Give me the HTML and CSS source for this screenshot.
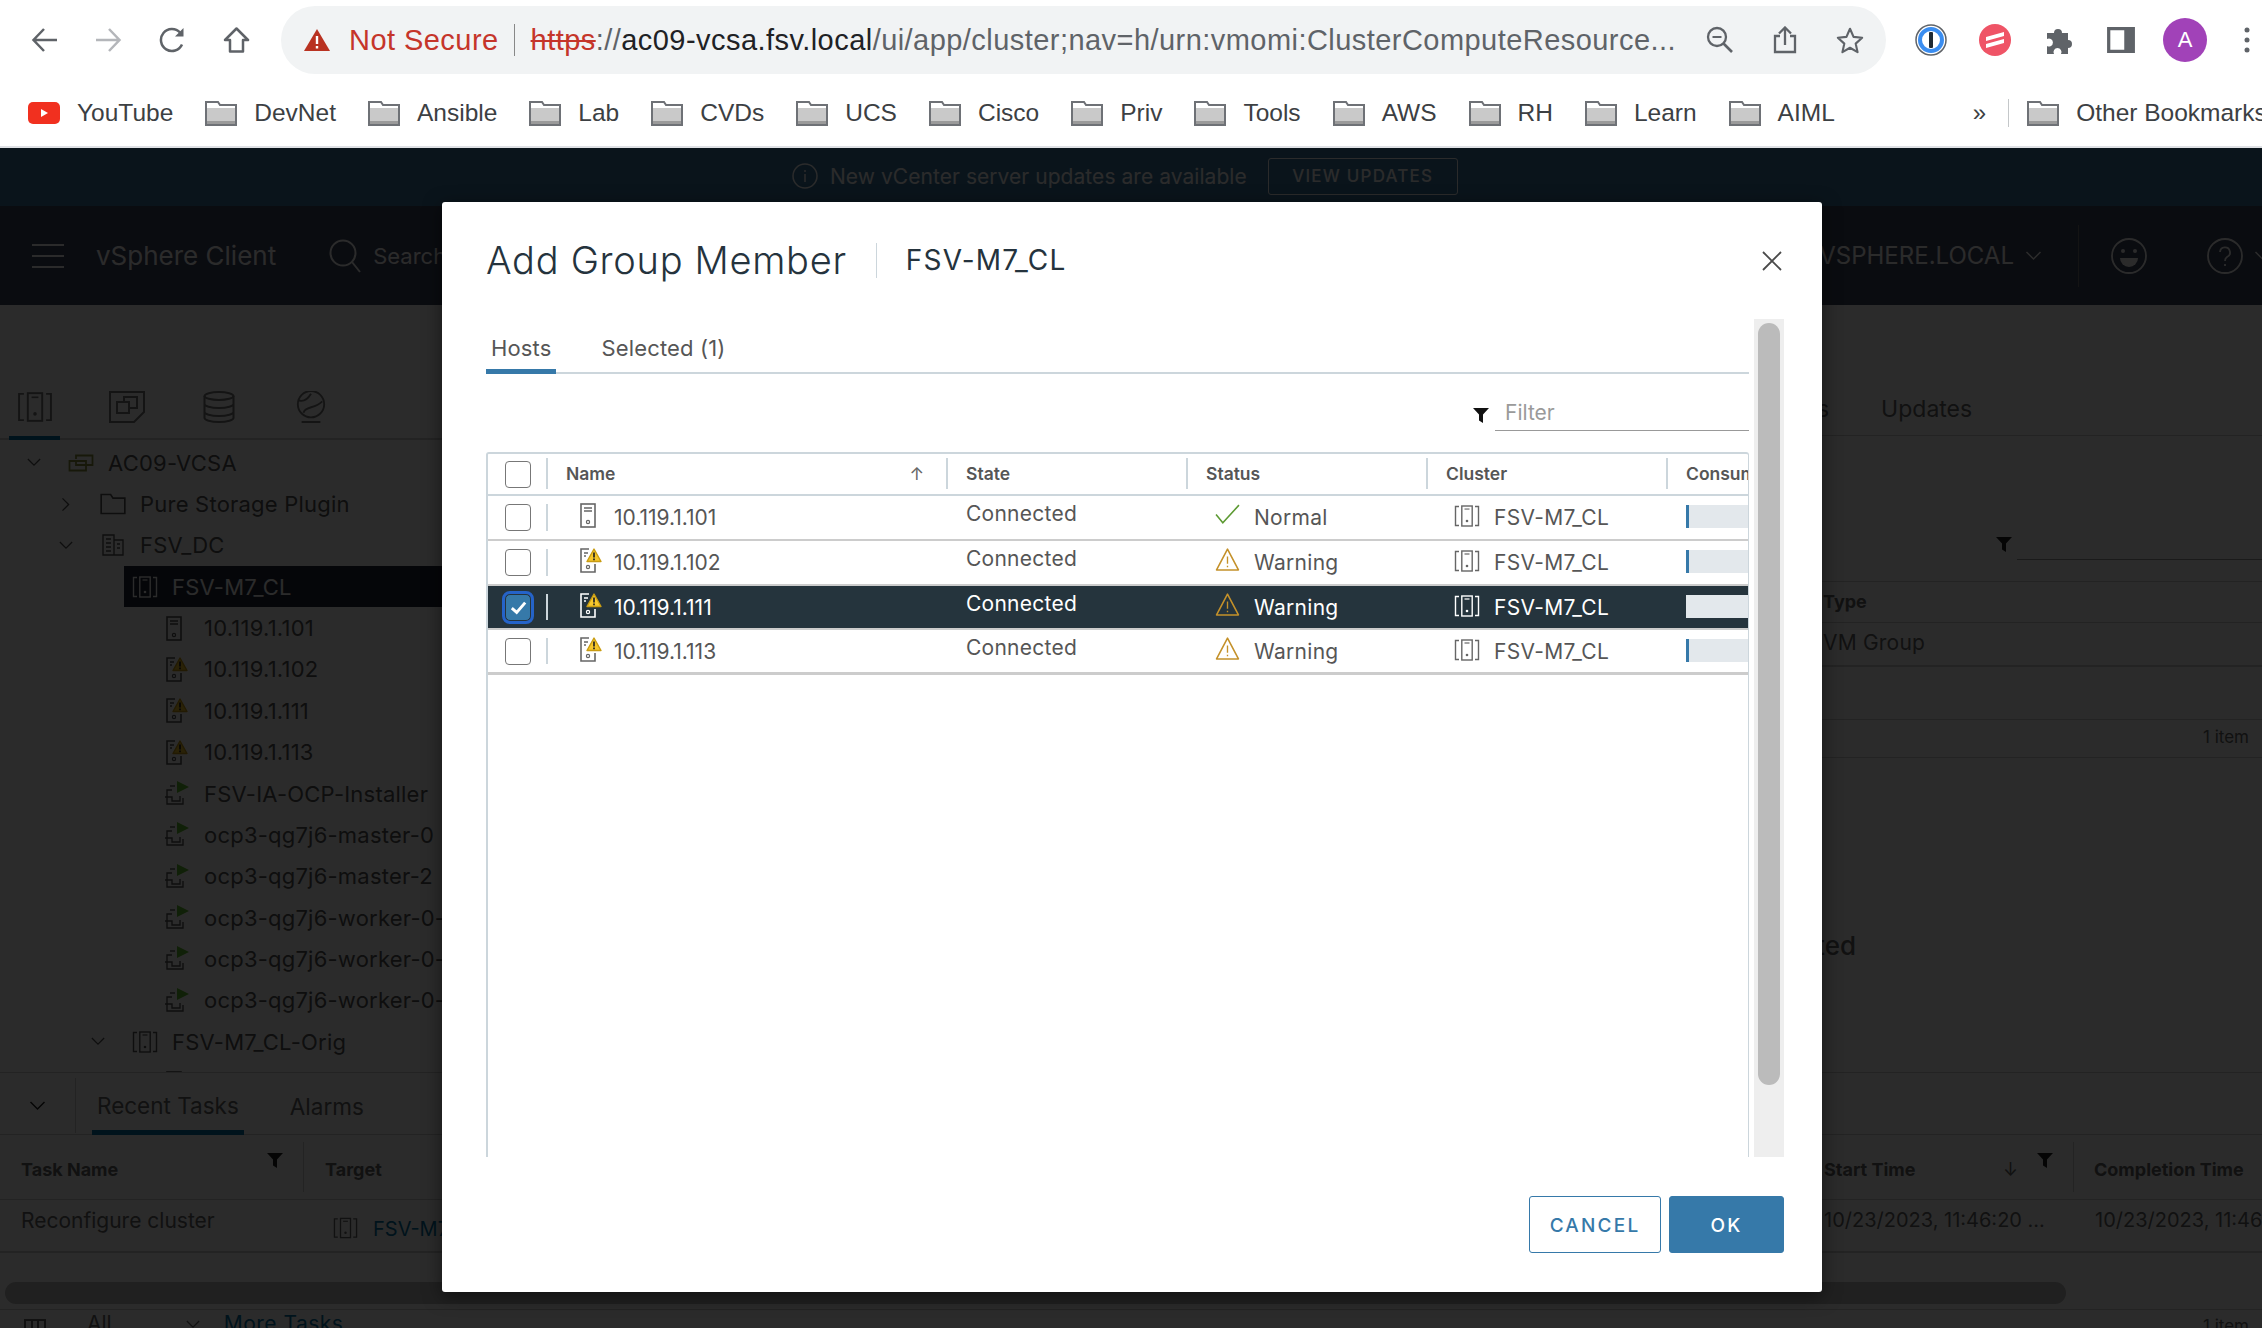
FILE: index.html
```html
<!DOCTYPE html>
<html lang="en">
    <head>
        <meta charset="utf-8">
        <title>Add Group Member</title>
        <link rel="stylesheet" href="styles.css">
    </head>
    <body>
        <!-- shared icons -->
        <svg class="sprite" aria-hidden="true">
            <symbol id="i-folder" viewBox="0 0 32 26">
                <path d="M1 25V2h12l2 3h16v20z" fill="#fff" stroke="#6e7176" stroke-width="2"/>
                <rect x="2" y="8" width="28" height="16" fill="#c9c9c9"/>
                <rect x="2" y="21" width="28" height="3" fill="#9a9a9a"/>
            </symbol>
            <symbol id="i-host" viewBox="0 0 22 25">
                <rect x="1" y="1" width="14" height="23" fill="none" stroke="currentColor" stroke-width="1.6"/>
                <path d="M4 5h8M4 8h8" stroke="currentColor" stroke-width="1.4"/>
                <circle cx="8" cy="19" r="1.6" fill="none" stroke="currentColor" stroke-width="1.2"/>
            </symbol>
            <symbol id="i-host-warn" viewBox="0 0 22 25">
                <path d="M15 16v8H1V1h8" fill="none" stroke="currentColor" stroke-width="1.6"/>
                <path d="M4 5h4M4 8h2" stroke="currentColor" stroke-width="1.4"/>
                <circle cx="8" cy="19" r="1.6" fill="none" stroke="currentColor" stroke-width="1.2"/>
                <path d="M14 1l7 12.5H7z" fill="#f6c72c" stroke="#c99c12" stroke-width="1.4" stroke-linejoin="round"/>
                <path d="M14 4.5v5M14 10.6v1.6" stroke="#222" stroke-width="1.7"/>
            </symbol>
            <symbol id="i-warning" viewBox="0 0 24 24">
                <path d="M12 2L22.5 22H1.500z" fill="none" stroke="#c4912a" stroke-width="1.5" stroke-linejoin="round"/>
                <path d="M12 9v7M12 18v1.500" stroke="#c4912a" stroke-width="1.3"/>
            </symbol>
            <symbol id="i-cluster" viewBox="0 0 26 22">
                <path d="M5 1.500H1.500v19H5M21 1.500h3.500v19H21" fill="none" stroke="currentColor" stroke-width="1.400"/>
                <rect x="7.800" y="1" width="10.400" height="20" fill="none" stroke="currentColor" stroke-width="1.400"/>
                <path d="M10.500 4h5" stroke="currentColor" stroke-width="1.200"/>
                <circle cx="13" cy="16" r="1.300" fill="currentColor"/>
            </symbol>
            <symbol id="i-funnel" viewBox="0 0 16 15">
                <path d="M0 0h16L10 6.500V15L6 12.500V6.500z" fill="currentColor"/>
            </symbol>
            <symbol id="i-vm" viewBox="0 0 26 25">
                <path d="M8 9H3v14h16v-6M1 16h7v4h8v-5" fill="none" stroke="currentColor" stroke-width="1.400"/>
                <path d="M6 5h5" stroke="currentColor" stroke-width="1.400"/>
                <path d="M13 0l12 6-12 6z" fill="#62bd2f"/>
            </symbol>
            <symbol id="i-chevron" viewBox="0 0 16 10">
                <path d="M1 1l7 7 7-7" fill="none" stroke="currentColor" stroke-width="1.500"/>
            </symbol>
        </svg>

        <div class="browser-bar">
            <div class="nav-buttons">
                <svg class="chrome-icon" viewBox="0 0 27 26"><path d="M26 13H3M13 2L2.500 13 13 24" fill="none" stroke="#5f6368" stroke-width="2.500"/></svg>
                <svg class="chrome-icon" viewBox="0 0 27 26"><path d="M1 13h23M14 2l10.500 11L14 24" fill="none" stroke="#b4b6ba" stroke-width="2.500"/></svg>
                <svg class="chrome-icon" viewBox="0 0 27 26"><path d="M23 17.500A11 11 0 1 1 21 5.500" fill="none" stroke="#5f6368" stroke-width="2.500"/><path d="M24.500 1v8.500H16z" fill="#5f6368"/></svg>
                <svg class="chrome-icon" viewBox="0 0 27 26"><path d="M13.500 1.500L25 13h-5v11.500H7V13H2z" fill="none" stroke="#5f6368" stroke-width="2.500" stroke-linejoin="round"/></svg>
            </div>
            <div class="omnibox">
                <svg class="not-secure-icon" viewBox="0 0 26 22"><path d="M13 0l13 22H0z" fill="#b93221"/><path d="M13 7v8M13 17v2.500" stroke="#fff" stroke-width="2.400"/></svg>
                <span class="not-secure">Not Secure</span>
                <span class="omni-sep"></span>
                <span class="url"><s>https</s><span class="url-dim">://</span><span class="url-host">ac09-vcsa.fsv.local</span><span class="url-dim">/ui/app/cluster;nav=h/urn:vmomi:ClusterComputeResource...</span></span>
                <div class="omni-actions">
                    <svg class="omni-icon" viewBox="0 0 28 28"><circle cx="11" cy="11" r="9" fill="none" stroke="#5f6368" stroke-width="2.300"/><path d="M17.500 17.500L26 26" stroke="#5f6368" stroke-width="2.600"/><path d="M6.500 11h9" stroke="#5f6368" stroke-width="2"/></svg>
                    <svg class="omni-icon" viewBox="0 0 28 28"><path d="M9 10H4v16h20V10h-5" fill="none" stroke="#5f6368" stroke-width="2.300"/><path d="M14 19V2M8 7.500L14 1.500l6 6" fill="none" stroke="#5f6368" stroke-width="2.300"/></svg>
                    <svg class="omni-icon" viewBox="0 0 30 28"><path d="M15 2l3.800 8.600 9.200 1-6.900 6.300 2 9.100-8.100-4.700L6.900 27l2-9.100L2 11.600l9.200-1z" fill="none" stroke="#5f6368" stroke-width="2.300" stroke-linejoin="round"/></svg>
                </div>
            </div>
            <div class="extensions">
                <svg class="ext-icon" viewBox="0 0 32 32"><circle cx="16" cy="16" r="15" fill="#fff" stroke="#5f6368" stroke-width="1.500"/><circle cx="16" cy="16" r="11" fill="none" stroke="#3a8df0" stroke-width="4"/><rect x="14" y="8" width="4" height="16" rx="1" fill="#1f2a33"/></svg>
                <svg class="ext-icon" viewBox="0 0 32 32"><circle cx="16" cy="16" r="16" fill="#ef5466"/><path d="M7 13l18-5v4L7 17zM7 20l18-5v4L7 24z" fill="#fff"/></svg>
                <svg class="ext-icon" viewBox="0 0 32 32"><path d="M4 9h7a4 4 0 1 1 8 0h6v7a4 4 0 1 1 0 8v6h-7a4 4 0 1 0-7 0H4v-8a4 4 0 1 0 0-7z" fill="#5f6368"/></svg>
                <svg class="ext-icon" viewBox="0 0 30 28"><rect width="30" height="28" fill="#5f6368"/><rect x="3.500" y="3.500" width="15" height="21" fill="#fff"/></svg>
                <span class="avatar">A</span>
                <svg class="menu-dots" viewBox="0 0 6 26"><circle cx="3" cy="3" r="2.500"/><circle cx="3" cy="13" r="2.500"/><circle cx="3" cy="23" r="2.500"/></svg>
            </div>
        </div>

        <div class="bookmarks">
            <span class="bookmark"><svg class="yt-icon" viewBox="0 0 32 22"><rect width="32" height="22" rx="5" fill="#f1301f"/><path d="M13 7l7 4-7 4z" fill="#fff"/></svg>YouTube</span>
            <span class="bookmark"><svg class="folder"><use href="#i-folder"/></svg>DevNet</span>
            <span class="bookmark"><svg class="folder"><use href="#i-folder"/></svg>Ansible</span>
            <span class="bookmark"><svg class="folder"><use href="#i-folder"/></svg>Lab</span>
            <span class="bookmark"><svg class="folder"><use href="#i-folder"/></svg>CVDs</span>
            <span class="bookmark"><svg class="folder"><use href="#i-folder"/></svg>UCS</span>
            <span class="bookmark"><svg class="folder"><use href="#i-folder"/></svg>Cisco</span>
            <span class="bookmark"><svg class="folder"><use href="#i-folder"/></svg>Priv</span>
            <span class="bookmark"><svg class="folder"><use href="#i-folder"/></svg>Tools</span>
            <span class="bookmark"><svg class="folder"><use href="#i-folder"/></svg>AWS</span>
            <span class="bookmark"><svg class="folder"><use href="#i-folder"/></svg>RH</span>
            <span class="bookmark"><svg class="folder"><use href="#i-folder"/></svg>Learn</span>
            <span class="bookmark"><svg class="folder"><use href="#i-folder"/></svg>AIML</span>
            <span class="bookmarks-more">»</span>
            <span class="bookmark bookmark-other"><svg class="folder"><use href="#i-folder"/></svg>Other Bookmarks</span>
        </div>

        <main class="viewport">
            <div class="banner">
                <svg class="banner-icon" viewBox="0 0 26 26"><circle cx="13" cy="13" r="12" fill="none" stroke="#fff" stroke-width="1.500"/><path d="M13 11v8M13 7v2" stroke="#fff" stroke-width="1.500"/></svg>
                <span>New vCenter server updates are available</span>
                <span class="banner-btn">VIEW UPDATES</span>
            </div>

            <header class="topbar">
                <span class="hamburger"><i></i><i></i><i></i></span>
                <span class="brand">vSphere Client</span>
                <svg class="topbar-search" viewBox="0 0 32 34"><circle cx="14" cy="14" r="12.500" fill="none" stroke="#fff" stroke-width="2"/><path d="M23 23l8 10" stroke="#fff" stroke-width="2"/></svg>
                <span class="search-label">Search in all environments</span>
                <span class="user">ADMINISTRATOR@VSPHERE.LOCAL</span>
                <svg class="user-chevron"><use href="#i-chevron"/></svg>
                <span class="topbar-sep"></span>
                <svg class="topbar-icon" viewBox="0 0 36 36"><circle cx="18" cy="18" r="17" fill="none" stroke="#fff" stroke-width="1.800"/><circle cx="12" cy="13" r="2" fill="#fff"/><circle cx="24" cy="13" r="2" fill="#fff"/><path d="M9 20h18a9 9 0 0 1-18 0z" fill="#fff"/></svg>
                <svg class="topbar-icon help-icon" viewBox="0 0 36 36"><circle cx="18" cy="18" r="17" fill="none" stroke="#fff" stroke-width="1.800"/><path d="M13 14a5 5 0 1 1 7 5c-1.500 1-2 2-2 4M18 26v2" fill="none" stroke="#fff" stroke-width="1.800"/></svg>
                <svg class="user-chevron last-chevron"><use href="#i-chevron"/></svg>
            </header>

            <div class="workspace">
                <aside class="sidebar">
                    <div class="sidebar-tabs">
                        <span class="sidebar-tab active"><svg class="sidebar-icon"><use href="#i-cluster"/></svg></span>
                        <span class="sidebar-tab"><svg class="sidebar-icon" viewBox="0 0 36 32"><path d="M1 1h34v20l-10 10H1z" fill="none" stroke="currentColor" stroke-width="2"/><path d="M8 11h12v11H8zM15 11V6h13v11h-8" fill="none" stroke="currentColor" stroke-width="2"/></svg></span>
                        <span class="sidebar-tab"><svg class="sidebar-icon" viewBox="0 0 32 32"><ellipse cx="16" cy="5" rx="14.500" ry="4" fill="none" stroke="currentColor" stroke-width="2"/><path d="M1.500 5v22c0 2 6 4 14.500 4s14.500-2 14.500-4V5M1.500 13c0 2 6 4 14.500 4s14.500-2 14.500-4M1.500 21c0 2 6 4 14.500 4s14.500-2 14.500-4" fill="none" stroke="currentColor" stroke-width="2"/></svg></span>
                        <span class="sidebar-tab"><svg class="sidebar-icon" viewBox="0 0 32 34"><circle cx="16" cy="14" r="14" fill="none" stroke="currentColor" stroke-width="2"/><path d="M3 10c6 2 10-2 13-7M8 23c2-7 12-4 20-12M6 33h20" fill="none" stroke="currentColor" stroke-width="2"/></svg></span>
                    </div>
                    <div class="tree">
                        <div class="tree-row lvl-0"><svg class="twisty"><use href="#i-chevron"/></svg><span class="tree-icon vc-icon"><svg viewBox="0 0 26 18"><path d="M8 5V1.500h16.500V11H18M1.500 7H18v9.500H1.500zM8 7v4h10" fill="none" stroke="currentColor" stroke-width="1.800"/></svg></span><span>AC09-VCSA</span></div>
                        <div class="tree-row lvl-1"><svg class="twisty twisty-closed"><use href="#i-chevron"/></svg><span class="tree-icon"><svg viewBox="0 0 22 18"><path d="M1 17V1h8l2 3h10v13z" fill="none" stroke="currentColor" stroke-width="1.400"/></svg></span><span>Pure Storage Plugin</span></div>
                        <div class="tree-row lvl-1"><svg class="twisty"><use href="#i-chevron"/></svg><span class="tree-icon"><svg viewBox="0 0 22 22"><path d="M1 21V1h11v20zM12 6h9v15h-9M4 5h5M4 9h5M4 13h5M4 17h5M15 10h3M15 14h3" fill="none" stroke="currentColor" stroke-width="1.400"/></svg></span><span>FSV_DC</span></div>
                        <div class="tree-row lvl-2 selected"><svg class="twisty"><use href="#i-chevron"/></svg><span class="tree-icon"><svg><use href="#i-cluster"/></svg></span><span>FSV-M7_CL</span></div>
                        <div class="tree-row lvl-3"><span class="twisty"></span><span class="tree-icon"><svg><use href="#i-host"/></svg></span><span>10.119.1.101</span></div>
                        <div class="tree-row lvl-3"><span class="twisty"></span><span class="tree-icon"><svg><use href="#i-host-warn"/></svg></span><span>10.119.1.102</span></div>
                        <div class="tree-row lvl-3"><span class="twisty"></span><span class="tree-icon"><svg><use href="#i-host-warn"/></svg></span><span>10.119.1.111</span></div>
                        <div class="tree-row lvl-3"><span class="twisty"></span><span class="tree-icon"><svg><use href="#i-host-warn"/></svg></span><span>10.119.1.113</span></div>
                        <div class="tree-row lvl-3"><span class="twisty"></span><span class="tree-icon"><svg><use href="#i-vm"/></svg></span><span>FSV-IA-OCP-Installer</span></div>
                        <div class="tree-row lvl-3"><span class="twisty"></span><span class="tree-icon"><svg><use href="#i-vm"/></svg></span><span>ocp3-qg7j6-master-0</span></div>
                        <div class="tree-row lvl-3"><span class="twisty"></span><span class="tree-icon"><svg><use href="#i-vm"/></svg></span><span>ocp3-qg7j6-master-2</span></div>
                        <div class="tree-row lvl-3"><span class="twisty"></span><span class="tree-icon"><svg><use href="#i-vm"/></svg></span><span>ocp3-qg7j6-worker-0-1</span></div>
                        <div class="tree-row lvl-3"><span class="twisty"></span><span class="tree-icon"><svg><use href="#i-vm"/></svg></span><span>ocp3-qg7j6-worker-0-2</span></div>
                        <div class="tree-row lvl-3"><span class="twisty"></span><span class="tree-icon"><svg><use href="#i-vm"/></svg></span><span>ocp3-qg7j6-worker-0-3</span></div>
                        <div class="tree-row lvl-2"><svg class="twisty"><use href="#i-chevron"/></svg><span class="tree-icon"><svg><use href="#i-cluster"/></svg></span><span>FSV-M7_CL-Orig</span></div>
                        <div class="tree-row lvl-3"><span class="twisty"></span><span class="tree-icon"><svg><use href="#i-host"/></svg></span><span>10.119.1.103</span></div>
                    </div>
                </aside>

                <section class="content">
                    <div class="content-tabs"><span>Permissions</span><span>Updates</span></div>
                    <div class="content-filter">
                        <svg class="funnel"><use href="#i-funnel"/></svg>
                        <span class="content-filter-input"></span>
                    </div>
                    <div class="content-head">Type</div>
                    <div class="content-cell">VM Group</div>
                    <div class="content-gap"></div>
                    <div class="content-foot">1 item</div>
                    <div class="content-empty">No VM Group selected</div>
                </section>
            </div>

            <section class="tasks">
                <div class="tasks-tabs">
                    <span class="tasks-toggle"><svg class="tasks-chevron"><use href="#i-chevron"/></svg></span>
                    <span class="tasks-tab active">Recent Tasks</span>
                    <span class="tasks-tab">Alarms</span>
                </div>
                <div class="tasks-grid tasks-header">
                    <div class="tasks-col">Task Name<svg class="funnel tasks-funnel"><use href="#i-funnel"/></svg></div>
                    <div class="tasks-col">Target</div>
                    <div class="tasks-col">Start Time<span class="sort-down">↓</span><svg class="funnel tasks-funnel"><use href="#i-funnel"/></svg></div>
                    <div class="tasks-col">Completion Time</div>
                </div>
                <div class="tasks-grid tasks-row">
                    <div class="tasks-cell tasks-name">Reconfigure cluster</div>
                    <div class="tasks-cell tasks-target"><svg class="tasks-target-icon"><use href="#i-cluster"/></svg><span>FSV-M7_CL</span></div>
                    <div class="tasks-cell">10/23/2023, 11:46:20 ...</div>
                    <div class="tasks-cell">10/23/2023, 11:46:21 AM</div>
                </div>
                <div class="tasks-scroll"><span class="tasks-thumb"></span></div>
                <div class="tasks-foot">
                    <svg class="tasks-foot-icon" viewBox="0 0 22 16"><path d="M1 15V1h20v14M8 1v14M14 1v14" fill="none" stroke="currentColor" stroke-width="2"/></svg>
                    <span class="tasks-all">All</span>
                    <svg class="tasks-all-chevron"><use href="#i-chevron"/></svg>
                    <span class="tasks-more">More Tasks</span>
                    <span class="tasks-count">1 item</span>
                </div>
            </section>

            <div class="backdrop"></div>

            <div class="modal">
                <div class="modal-header">
                    <h3 class="modal-title">Add Group Member</h3>
                    <span class="modal-subtitle">FSV-M7_CL</span>
                    <svg class="modal-close" viewBox="0 0 20 20"><path d="M1 1l18 18M19 1L1 19" stroke="#4a4a4a" stroke-width="1.800"/></svg>
                </div>
                <div class="modal-body">
                    <div class="modal-content">
                        <div class="tabs">
                            <span class="tab active">Hosts</span>
                            <span class="tab">Selected (1)</span>
                        </div>
                        <div class="filter-row">
                            <svg class="funnel"><use href="#i-funnel"/></svg>
                            <span class="filter-input">Filter</span>
                        </div>
                        <div class="datagrid">
                            <div class="grid-row grid-header">
                                <div class="select-cell"><span class="checkbox"></span></div>
                                <div class="head-cell name-head">Name<span class="sort-up">↑</span></div>
                                <div class="head-cell">State</div>
                                <div class="head-cell">Status</div>
                                <div class="head-cell">Cluster</div>
                                <div class="head-cell">Consumed CPU</div>
                            </div>

                            <div class="grid-row host-row">
                                <div class="select-cell"><span class="checkbox"></span></div>
                                <div class="name-cell"><svg class="host-icon"><use href="#i-host"/></svg>10.119.1.101</div>
                                <div class="state-cell">Connected</div>
                                <div class="status-cell"><svg class="status-icon" viewBox="0 0 24 24"><path d="M1 12l6.500 8L23 3" fill="none" stroke="#5d9a33" stroke-width="1.500"/></svg>Normal</div>
                                <div class="cluster-cell"><svg class="cluster-icon"><use href="#i-cluster"/></svg>FSV-M7_CL</div>
                                <div class="bar-cell"><span class="usage-bar"></span></div>
                            </div>

                            <div class="grid-row host-row">
                                <div class="select-cell"><span class="checkbox"></span></div>
                                <div class="name-cell"><svg class="host-icon"><use href="#i-host-warn"/></svg>10.119.1.102</div>
                                <div class="state-cell">Connected</div>
                                <div class="status-cell"><svg class="status-icon"><use href="#i-warning"/></svg>Warning</div>
                                <div class="cluster-cell"><svg class="cluster-icon"><use href="#i-cluster"/></svg>FSV-M7_CL</div>
                                <div class="bar-cell"><span class="usage-bar"></span></div>
                            </div>

                            <div class="grid-row host-row is-selected">
                                <div class="select-cell"><span class="checkbox checked"><svg viewBox="0 0 14 12"><path d="M1.500 6.500L5.500 10l7-8" fill="none" stroke="#fff" stroke-width="2.400"/></svg></span></div>
                                <div class="name-cell"><svg class="host-icon"><use href="#i-host-warn"/></svg>10.119.1.111</div>
                                <div class="state-cell">Connected</div>
                                <div class="status-cell"><svg class="status-icon"><use href="#i-warning"/></svg>Warning</div>
                                <div class="cluster-cell"><svg class="cluster-icon"><use href="#i-cluster"/></svg>FSV-M7_CL</div>
                                <div class="bar-cell"><span class="usage-bar"></span></div>
                            </div>

                            <div class="grid-row host-row last-row">
                                <div class="select-cell"><span class="checkbox"></span></div>
                                <div class="name-cell"><svg class="host-icon"><use href="#i-host-warn"/></svg>10.119.1.113</div>
                                <div class="state-cell">Connected</div>
                                <div class="status-cell"><svg class="status-icon"><use href="#i-warning"/></svg>Warning</div>
                                <div class="cluster-cell"><svg class="cluster-icon"><use href="#i-cluster"/></svg>FSV-M7_CL</div>
                                <div class="bar-cell"><span class="usage-bar"></span></div>
                            </div>
                        </div>
                    </div>
                    <div class="scrollbar"><span class="scrollbar-thumb"></span></div>
                </div>
                <div class="modal-footer">
                    <button class="btn btn-outline">CANCEL</button>
                    <button class="btn btn-primary">OK</button>
                </div>
            </div>
        </main>
    </body>
</html>
```

FILE: styles.css
```css
html, body {
    height: 100%;
}

body {
    margin: 0;
    height: 1328px;
    overflow: hidden;
    display: flex;
    flex-direction: column;
    font-family: Inter, 'Open Sans', sans-serif;
    background-color: #fff;
}

.sprite {
    display: none;
}

/* Browser chrome */
.browser-bar {
    height: 81px;
    flex: none;
    display: flex;
    align-items: flex-start;
    padding-top: 6px;
    box-sizing: border-box;
    font-family: 'Liberation Sans', sans-serif;
}

.nav-buttons {
    display: flex;
    gap: 37px;
    padding: 21px 0 0 31px;
    width: 281px;
    box-sizing: border-box;
}

.chrome-icon {
    width: 27px;
    height: 26px;
    flex: none;
}

.omnibox {
    width: 1605px;
    height: 68px;
    border-radius: 34px;
    background-color: #f1f3f4;
    display: flex;
    align-items: center;
    padding-left: 23px;
    box-sizing: border-box;
    font-size: 29px;
    letter-spacing: 0.45px;
    white-space: nowrap;
}

.not-secure-icon {
    width: 26px;
    height: 22px;
    margin-right: 19px;
}

.not-secure {
    color: #c5352a;
}

.omni-sep {
    width: 1px;
    height: 32px;
    background-color: #888;
    margin: 0 16px 0 15px;
}

.url {
    color: #5f6368;
}

.url s {
    color: #c5352a;
}

.url-host {
    color: #202124;
}

.omni-actions {
    display: flex;
    gap: 37px;
    margin-left: 30px;
    align-items: center;
}

.omni-icon {
    width: 28px;
    height: 28px;
}

.extensions {
    display: flex;
    align-items: center;
    height: 68px;
    padding-left: 29px;
    gap: 32px;
}

.ext-icon {
    width: 32px;
    height: 32px;
}

.extensions .ext-icon:nth-child(4) {
    width: 28px;
    height: 26px;
}

.avatar {
    width: 44px;
    height: 44px;
    margin-left: -4px;
    border-radius: 50%;
    background-color: #a142b8;
    color: #fff;
    font-size: 22px;
    display: flex;
    align-items: center;
    justify-content: center;
}

.menu-dots {
    width: 6px;
    height: 26px;
    margin-left: 5px;
    fill: #5f6368;
    flex: none;
}

.bookmarks {
    height: 67px;
    flex: none;
    box-sizing: border-box;
    border-bottom: 2px solid #dfe1e5;
    display: flex;
    align-items: center;
    padding: 0 0 1px 28px;
    gap: 32px;
    font-family: 'Liberation Sans', sans-serif;
    font-size: 24.5px;
    color: #3c4043;
    white-space: nowrap;
    overflow: hidden;
}

.bookmark {
    display: flex;
    align-items: center;
    gap: 17px;
}

.yt-icon {
    width: 32px;
    height: 22px;
    flex: none;
}

.folder {
    width: 32px;
    height: 26px;
    flex: none;
}

.bookmarks-more {
    margin-left: 106px;
    font-size: 24px;
    padding-right: 22px;
    border-right: 1px solid #c4c7c9;
}

.bookmark-other {
    margin-left: -14px;
}

/* vSphere client behind the dialog */
.viewport {
    position: relative;
    flex: 1;
    overflow: hidden;
    display: flex;
    flex-direction: column;
    background-color: #fff;
    color: #666;
    white-space: nowrap;
}

.backdrop {
    position: absolute;
    inset: 0;
    background-color: rgba(0, 0, 0, 0.83);
}

.banner {
    height: 58px;
    flex: none;
    background-color: #3b769f;
    color: #fff;
    font-size: 21px;
    letter-spacing: 0.05px;
    display: flex;
    align-items: center;
    padding: 0 0 2px 792px;
    box-sizing: border-box;
}

.banner-icon {
    width: 26px;
    height: 26px;
    margin-right: 12px;
}

.banner-btn {
    margin-left: 21px;
    width: 190px;
    height: 37px;
    box-sizing: border-box;
    border: 1px solid #fff;
    border-radius: 3px;
    display: flex;
    align-items: center;
    justify-content: center;
    font-size: 17px;
    font-weight: 500;
    letter-spacing: 1.2px;
}

.topbar {
    height: 99px;
    flex: none;
    background-color: #3b465e;
    color: #fff;
    display: flex;
    align-items: center;
    padding-left: 32px;
    font-size: 24px;
}

.hamburger {
    width: 32px;
    display: flex;
    flex-direction: column;
    gap: 9px;
}

.hamburger i {
    height: 2px;
    background-color: #fff;
}

.brand {
    margin-left: 32px;
    font-size: 26px;
}

.topbar-search {
    width: 32px;
    height: 34px;
    margin-left: 53px;
}

.search-label {
    margin-left: 12px;
    font-size: 22px;
}

.user {
    margin-left: auto;
    font-size: 24px;
}

.user-chevron {
    width: 17px;
    height: 10px;
    margin-left: 11px;
    flex: none;
}

.last-chevron {
    margin-right: -9px;
}

.topbar-sep {
    width: 1px;
    height: 62px;
    background-color: #777;
    margin: 0 32px 0 36px;
}

.topbar-icon {
    width: 36px;
    height: 36px;
    flex: none;
}

.help-icon {
    margin-left: 60px;
}

.workspace {
    height: 767px;
    flex: none;
    display: flex;
}

.sidebar {
    width: 442px;
    flex: none;
    overflow: hidden;
    font-size: 22px;
    color: #555;
}

.sidebar-tabs {
    height: 135px;
    box-sizing: border-box;
    border-bottom: 2px solid #ccc;
    display: flex;
    align-items: flex-end;
    padding-left: 9px;
    gap: 41px;
}

.sidebar-tab {
    width: 51px;
    height: 49px;
    box-sizing: border-box;
    display: flex;
    justify-content: center;
    color: #777;
    margin-bottom: -2px;
}

.sidebar-tab.active {
    border-bottom: 4px solid #0072a3;
}

.sidebar-icon {
    width: 36px;
    height: 32px;
}

.tree {
    padding-top: 2px;
}

.tree-row {
    height: 41.36px;
    display: flex;
    align-items: center;
    letter-spacing: 0.22px;
}

.lvl-0 { padding-left: 27px; }
.lvl-1 { padding-left: 59px; }
.lvl-2 { padding-left: 91px; }
.lvl-3 { padding-left: 123px; }

.tree-row.selected {
    background: linear-gradient(to right, transparent 124px, #1e2336 124px);
    color: #fff;
}

.twisty {
    width: 14px;
    height: 9px;
    flex: none;
    margin-right: 27px;
}

.twisty-closed {
    transform: rotate(-90deg);
}

.tree-icon {
    width: 26px;
    height: 26px;
    flex: none;
    margin-right: 14px;
    display: flex;
    align-items: center;
    justify-content: center;
}

.tree-icon svg {
    width: 26px;
    height: 22px;
}

.lvl-3 .tree-icon svg {
    height: 25px;
}

.vc-icon {
    color: #8a8f3c;
}

.content {
    flex: 1;
    min-width: 0;
    font-size: 21px;
}

.content-tabs {
    height: 131px;
    box-sizing: border-box;
    border-bottom: 1px solid #ccc;
    display: flex;
    align-items: flex-end;
    gap: 52px;
    padding: 0 0 12px 1255px;
    font-size: 23px;
}

.content-filter {
    height: 146px;
    box-sizing: border-box;
    border-bottom: 1px solid #ccc;
    display: flex;
    padding: 101px 0 0 1554px;
}

.funnel {
    width: 16px;
    height: 15px;
    flex: none;
    color: #222;
}

.content-filter-input {
    flex: 1;
    height: 22px;
    margin-left: 5px;
    border-bottom: 1px solid #999;
}

.content-head {
    height: 41px;
    box-sizing: border-box;
    border-bottom: 1px solid #ccc;
    padding-left: 1381px;
    font-size: 18px;
    font-weight: 700;
    line-height: 40px;
}

.content-cell {
    height: 44px;
    box-sizing: border-box;
    border-bottom: 2px solid #ccc;
    padding-left: 1381px;
    line-height: 40px;
    letter-spacing: 0.2px;
}

.content-gap {
    height: 53px;
    box-sizing: border-box;
    border-bottom: 1px solid #ccc;
}

.content-foot {
    height: 38px;
    box-sizing: border-box;
    border-bottom: 1px solid #ccc;
    text-align: right;
    padding-right: 13px;
    font-size: 17px;
    line-height: 34px;
}

.content-empty {
    width: 1414px;
    margin-top: 172px;
    text-align: right;
    font-size: 26px;
    font-weight: 500;
}

/* Recent tasks panel */
.tasks {
    flex: 1;
    min-height: 0;
    overflow: hidden;
    font-size: 20px;
}

.tasks-tabs {
    height: 63px;
    box-sizing: border-box;
    border-top: 1px solid #ccc;
    border-bottom: 1px solid #ccc;
    display: flex;
    align-items: stretch;
}

.tasks-toggle {
    width: 76px;
    height: 55px;
    margin-top: 5px;
    box-sizing: border-box;
    border-right: 1px solid #ccc;
    display: flex;
    align-items: center;
    justify-content: center;
}

.tasks-chevron {
    width: 17px;
    height: 10px;
    color: #222;
}

.tasks-tab {
    display: flex;
    align-items: center;
    padding: 6px 5px 0;
    margin-left: 16px;
    font-size: 22.5px;
}

.tasks-tab.active {
    border-bottom: 5px solid #0072a3;
    margin-bottom: -1px;
    padding-top: 7px;
}

.tasks-tab + .tasks-tab {
    margin-left: 41px;
}

.tasks-grid {
    display: grid;
    grid-template-columns: 304px 1499px 271px 1fr;
    border-bottom: 1px solid #ccc;
}

.tasks-header {
    height: 64px;
    font-size: 18px;
    font-weight: 700;
}

.tasks-col {
    display: flex;
    align-items: center;
    padding: 4px 0 0 21px;
    margin: 7px 0;
    border-right: 1px solid #ccc;
    position: relative;
}

.tasks-col:last-child {
    border-right: none;
    padding-left: 20px;
}

.tasks-funnel {
    position: absolute;
    right: 20px;
    top: 11px;
}

.sort-down {
    position: absolute;
    right: 55px;
    font-weight: 400;
}

.tasks-row {
    height: 51px;
    border-bottom-width: 2px;
}

.tasks-cell {
    padding: 8px 0 0 21px;
}

.tasks-name {
    font-size: 21px;
}

.tasks-target {
    display: flex;
    gap: 15px;
    color: #0072a3;
    padding: 17px 0 0 29px;
}

.tasks-target-icon {
    width: 25px;
    height: 22px;
    color: #666;
}

.tasks-scroll {
    height: 57px;
    box-sizing: border-box;
    border-bottom: 1px solid #ccc;
    padding: 29px 0 0 5px;
}

.tasks-thumb {
    display: block;
    width: 2061px;
    height: 22px;
    border-radius: 11px;
    background-color: #bbb;
}

.tasks-foot {
    display: flex;
    align-items: flex-start;
    padding: 1px 13px 0 24px;
    font-size: 21px;
}

.tasks-foot-icon {
    width: 22px;
    height: 16px;
    margin-top: 8px;
}

.tasks-all {
    margin-left: 41px;
}

.tasks-all-chevron {
    width: 14px;
    height: 9px;
    margin: 9px 0 0 74px;
}

.tasks-more {
    margin-left: 24px;
    color: #0072a3;
    letter-spacing: 0.5px;
}

.tasks-count {
    margin-left: auto;
    font-size: 17px;
    padding-top: 5px;
}

/* Add Group Member dialog */
.modal {
    position: absolute;
    left: 442px;
    top: 54px;
    width: 1380px;
    height: 1090px;
    border-radius: 3px;
    background-color: #fff;
    box-shadow: 0 4px 18px rgba(0, 0, 0, 0.5);
    display: flex;
    flex-direction: column;
    color: #565656;
}

.modal-header {
    height: 117px;
    flex: none;
    box-sizing: border-box;
    display: flex;
    align-items: center;
    padding: 0 40px 0 44px;
}

.modal-title {
    margin: 0 0 2px;
    font-size: 38px;
    font-weight: 300;
    letter-spacing: 0.7px;
    color: #25333d;
}

.modal-subtitle {
    margin-left: 29px;
    padding-left: 29px;
    border-left: 1px solid #ccd6dc;
    font-size: 28px;
    line-height: 35px;
    letter-spacing: 1.2px;
    color: #25333d;
}

.modal-close {
    width: 20px;
    height: 20px;
    margin-left: auto;
}

.modal-body {
    height: 838px;
    flex: none;
    margin-left: 44px;
    width: 1298px;
    display: flex;
    gap: 5px;
}

.modal-content {
    width: 1263px;
    flex: none;
}

.tabs {
    height: 55px;
    box-sizing: border-box;
    border-bottom: 2px solid #ccd6dc;
    display: flex;
    font-size: 22px;
    letter-spacing: 0.15px;
    color: #565656;
}

.tab {
    padding: 0 4px 0 5px;
    margin-right: 41px;
    height: 55px;
    box-sizing: border-box;
    line-height: 58px;
}

.tab.active {
    border-bottom: 5px solid #3679a9;
}

.filter-row {
    height: 78px;
    display: flex;
    justify-content: flex-end;
    padding-top: 34px;
    box-sizing: border-box;
}

.filter-row .funnel {
    color: #111;
}

.filter-input {
    width: 254px;
    height: 31px;
    margin-left: 6px;
    margin-top: -8px;
    padding-left: 10px;
    box-sizing: border-box;
    border-bottom: 1px solid #999;
    font-size: 21px;
    color: #9a9a9a;
}

.datagrid {
    height: 705px;
    box-sizing: border-box;
    border: solid #ccd6dc;
    border-width: 2px 1px 0 2px;
    border-radius: 3px 3px 0 0;
    overflow: hidden;
}

.grid-row {
    display: grid;
    grid-template-columns: 58px 400px 240px 240px 240px 240px;
    width: 1300px;
    box-sizing: border-box;
}

.grid-header {
    height: 42px;
    border-bottom: 2px solid #ccd6dc;
    font-size: 17.5px;
    font-weight: 600;
}

.host-row {
    height: 45px;
    border-bottom: 2px solid #ccc;
    font-size: 21px;
}

.host-row.is-selected {
    background-color: #25343d;
    color: #fff;
    height: 44px;
}

.last-row {
    border-bottom-width: 3px;
}

.select-cell {
    display: flex;
    align-items: center;
    padding-left: 17px;
}

.checkbox {
    width: 26px;
    height: 27px;
    box-sizing: border-box;
    border: 1.5px solid #777;
    border-radius: 4px;
    background-color: #fff;
    display: flex;
    align-items: center;
    justify-content: center;
}

.checkbox svg {
    width: 17px;
    height: 15px;
}

.checkbox.checked {
    border: 1.5px solid #25343d;
    background-color: #3679a9;
    outline: 3px solid #2563c9;
    border-radius: 5px;
}

.head-cell {
    display: flex;
    align-items: center;
    padding-left: 18px;
    border-left: 2px solid #ccd6dc;
    margin: 4px 0 5px;
}

.name-head {
    position: relative;
}

.sort-up {
    position: absolute;
    right: 22px;
    font-weight: 400;
    color: #666;
}

.name-cell {
    display: flex;
    align-items: center;
    margin: 8px 0;
    padding-left: 32px;
    border-left: 2px solid #ccd6dc;
}

.host-icon {
    width: 22px;
    height: 25px;
    margin-right: 12px;
    margin-top: -4px;
    color: #666;
}

.is-selected .host-icon {
    color: #fff;
}

.state-cell {
    display: flex;
    align-items: center;
    padding: 0 0 8px 20px;
    letter-spacing: 0.25px;
}

.status-cell {
    display: flex;
    align-items: center;
    padding-left: 29px;
    letter-spacing: 0.3px;
}

.status-icon {
    width: 25px;
    height: 25px;
    margin-right: 14px;
    margin-top: -6px;
}

.cluster-cell {
    display: flex;
    align-items: center;
    padding-left: 28px;
    letter-spacing: 0.3px;
}

.cluster-icon {
    width: 26px;
    height: 22px;
    margin-right: 14px;
    margin-top: -3px;
    color: #666;
}

.is-selected .cluster-icon {
    color: #fff;
}

.bar-cell {
    padding: 9px 0 0 20px;
}

.usage-bar {
    display: block;
    height: 23px;
    background-color: #e3e8ec;
    border-left: 3px solid #3679a9;
}

.is-selected .usage-bar {
    border-left-color: #e3e8ec;
}

.scrollbar {
    width: 30px;
    flex: none;
    background-color: #eee;
    padding: 4px;
    box-sizing: border-box;
}

.scrollbar-thumb {
    display: block;
    width: 22px;
    height: 762px;
    border-radius: 11px;
    background-color: #bbb;
}

.modal-footer {
    display: flex;
    justify-content: flex-end;
    gap: 8px;
    padding: 39px 38px 0 0;
}

.btn {
    height: 57px;
    padding-top: 3px;
    border-radius: 3px;
    border: 1px solid #3679a9;
    font-family: inherit;
    font-size: 19px;
    font-weight: 500;
    letter-spacing: 2.2px;
}

.btn-outline {
    width: 132px;
    background-color: #fff;
    color: #3679a9;
}

.btn-primary {
    width: 115px;
    background-color: #3679a9;
    color: #fff;
}
```
